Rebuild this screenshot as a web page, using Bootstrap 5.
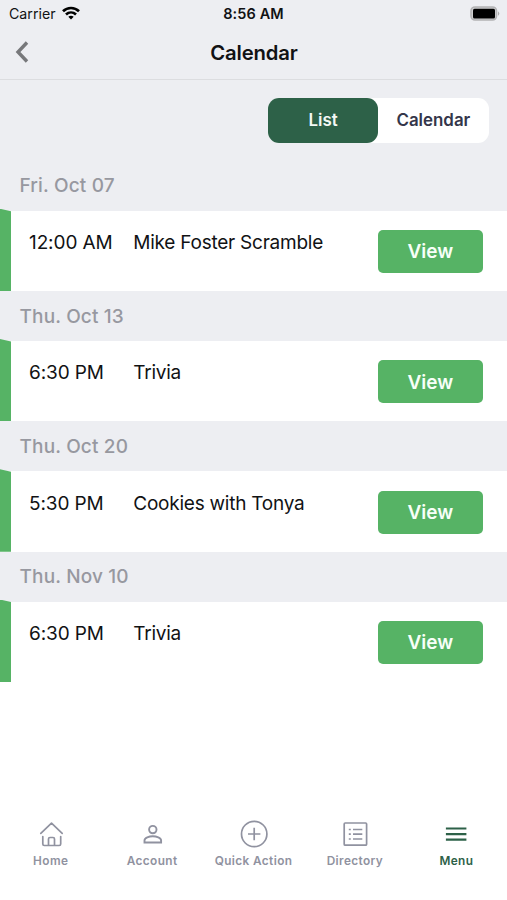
<!DOCTYPE html>
<html lang="en">
<head>
<meta charset="utf-8">
<meta name="viewport" content="width=device-width, initial-scale=1">
<title>Calendar</title>
<link href="https://cdn.jsdelivr.net/npm/bootstrap@5.3.0/dist/css/bootstrap.min.css" rel="stylesheet">
<style>
body{font-family:Inter,"Liberation Sans",sans-serif;color:#111214;height:900px;overflow:hidden;line-height:1}
svg{display:block;flex:none}
.surface{background:#edeef2}
.top-bar{height:79.5px;border-bottom:1.5px solid #dcdde0}
.thirds{grid-template-columns:1fr auto 1fr}
.status{height:27px;font-size:14.2px;padding:0 7px 0 9px}
.status .carrier{padding-top:1px}
.status .wifi{margin:0 0 2px 6px}
.status .clock{font-weight:600;font-size:14.5px;letter-spacing:.1px;padding:1px 2px 0 0}
.title-bar{height:51px;padding:0 15px}
.title-bar h1{font-size:20.3px;font-weight:600;letter-spacing:-.15px;line-height:1;padding:1px 0 0 1px}
.title-bar svg{margin-bottom:1px}
.toolbar{height:81.4px;padding:18px 18.5px 0 0}
.segments{width:220.5px;height:45px;border-radius:11px;background:#fff}
.segments .btn{width:110.25px;border:0;border-radius:11px;font-size:16.9px;font-weight:600;color:#34364a;padding:0;line-height:1}
.segments .btn.active{background:#2d6148;color:#f3f8f5}
.day{height:49.8px;padding:0 19.5px;color:#9798a0;font-size:19px;font-weight:500;letter-spacing:.15px;line-height:1;margin:0}
.event{height:80.5px;padding:19.3px 24.5px 0 29px;font-size:19px;letter-spacing:-.1px}
.event .stripe{left:0;top:-2px;width:11px;height:82.5px;background:#56b365;clip-path:polygon(0 0,100% 2.5px,100% 100%,0 100%)}
.event .time{width:104.3px}
.event .time,.event .name{padding-top:3px}
.event .name{letter-spacing:-.24px}
.event .btn{width:104.3px;height:43px;border:0;border-radius:5px;background:#56b365;color:#f7fff8;font-size:19px;font-weight:600;padding:1px 0 0;line-height:1}
.tabs{height:80px}
.tabs a{color:#9092a0;font-size:11.8px;font-weight:600;letter-spacing:.4px;text-decoration:none}
.tabs svg{margin-bottom:8px}
.tabs a.active{color:#2d6148}
</style>
</head>
<body class="d-flex flex-column bg-white">
<header class="surface top-bar">
  <div class="status thirds d-grid align-items-center">
    <div class="d-flex align-items-center"><span class="carrier">Carrier</span>
      <svg class="wifi" width="18" height="14" viewBox="0 0 18 14" fill="none" stroke="#000" stroke-width="2.7"><path d="M1 5.2C5.5.9 12.5.9 17 5.2"/><path d="M4 8.5c2.900-2.700 7.100-2.700 10 0"/><path d="M9 13.600 6.300 10.800q2.700-2 5.400 0Z" fill="#000" stroke="none"/></svg>
    </div>
    <span class="clock">8:56 AM</span>
    <svg class="ms-auto" width="30" height="15" viewBox="0 0 30 15"><rect x="1" y="1" width="25.500" height="13" rx="4" fill="#cfcfd1" stroke="#b2b2b4" stroke-width="1.600"/><rect x="3" y="2.800" width="22" height="9.600" rx="1.500" fill="#000"/><path d="M28 5.200q2.600 2.300 0 4.600Z" fill="#acacae"/></svg>
  </div>
  <div class="title-bar thirds d-grid align-items-center">
    <svg width="14" height="22" viewBox="0 0 14 22" fill="none" stroke="#77787b" stroke-width="3.400"><path d="M12 1.500 3 11l9 9.500"/></svg>
    <h1 class="m-0">Calendar</h1>
  </div>
</header>
<div class="surface toolbar d-flex justify-content-end">
  <div class="segments d-flex"><button class="btn active">List</button><button class="btn">Calendar</button></div>
</div>
<main class="flex-grow-1">
  <h2 class="surface day d-flex align-items-center">Fri. Oct 07</h2>
  <div class="event d-flex position-relative"><i class="stripe position-absolute"></i><span class="time">12:00 AM</span><span class="name">Mike Foster Scramble</span><button class="btn ms-auto">View</button></div>
  <h2 class="surface day d-flex align-items-center">Thu. Oct 13</h2>
  <div class="event d-flex position-relative"><i class="stripe position-absolute"></i><span class="time">6:30 PM</span><span class="name">Trivia</span><button class="btn ms-auto">View</button></div>
  <h2 class="surface day d-flex align-items-center">Thu. Oct 20</h2>
  <div class="event d-flex position-relative"><i class="stripe position-absolute"></i><span class="time">5:30 PM</span><span class="name">Cookies with Tonya</span><button class="btn ms-auto">View</button></div>
  <h2 class="surface day d-flex align-items-center">Thu. Nov 10</h2>
  <div class="event d-flex position-relative"><i class="stripe position-absolute"></i><span class="time">6:30 PM</span><span class="name">Trivia</span><button class="btn ms-auto">View</button></div>
</main>
<nav class="tabs row g-0 text-center">
  <a class="col d-flex flex-column align-items-center" href="#"><svg width="28" height="28" viewBox="0 0 28 28" fill="none" stroke="currentColor" stroke-width="1.700" stroke-linecap="round" stroke-linejoin="round"><path d="M3.800 13.400 14.500 3.200l10.700 10.200M5.800 16.500v7.500q0 1.500 1.500 1.500h14.900q1.500 0 1.500-1.500V16.500M11.500 25.500v-6.500q0-1.500 1.500-1.500h3q1.500 0 1.500 1.500V25.500"/></svg>Home</a>
  <a class="col d-flex flex-column align-items-center" href="#"><svg width="28" height="28" viewBox="0 0 28 28" fill="none" stroke="currentColor" stroke-width="1.900"><circle cx="14.800" cy="9.600" r="3.700"/><path d="M6.500 22.500v-2c0-2.800 4.700-4.200 8.300-4.200s8.300 1.400 8.300 4.200v2Z"/></svg>Account</a>
  <a class="col d-flex flex-column align-items-center" href="#"><svg width="28" height="28" viewBox="0 0 28 28" fill="none" stroke="currentColor" stroke-width="1.700"><circle cx="14.200" cy="14" r="12.700"/><path d="M8 14h12.400M14.200 7.800v12.400"/></svg>Quick Action</a>
  <a class="col d-flex flex-column align-items-center" href="#"><svg width="28" height="28" viewBox="0 0 28 28" fill="none" stroke="currentColor" stroke-width="1.700"><rect x="3.200" y="3" width="22.400" height="22.200" rx="1"/><path d="M12 9.500h9.300M12 14.200h9.300M12 19h9.300M7.800 9.500h2M7.800 14.200h2M7.800 19h2"/></svg>Directory</a>
  <a class="col d-flex flex-column align-items-center active" href="#"><svg width="28" height="28" viewBox="0 0 28 28" fill="none" stroke="currentColor" stroke-width="2.200"><path d="M3.900 8.500h20.500M3.900 14.100h20.500M3.900 19.700h20.500"/></svg>Menu</a>
</nav>
<script src="https://cdn.jsdelivr.net/npm/bootstrap@5.3.0/dist/js/bootstrap.bundle.min.js"></script>
</body>
</html>
